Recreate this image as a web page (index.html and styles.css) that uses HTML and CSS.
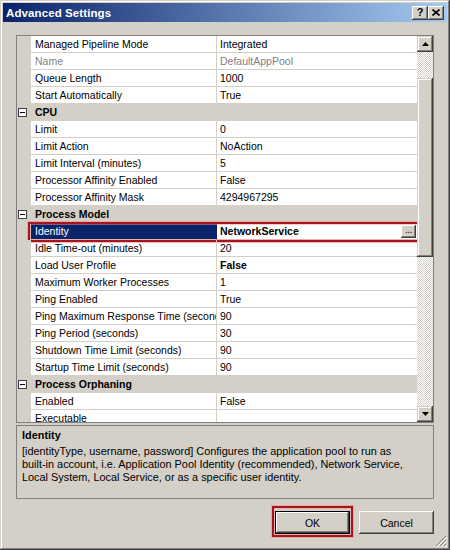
FILE: index.html
```html
<!DOCTYPE html>
<html>
<head>
<meta charset="utf-8">
<link rel="stylesheet" href="styles.css">
</head>
<body>
<div class="window">
  <div class="titlebar">
    <span class="title">Advanced Settings</span>
    <div class="tbtns">
      <span class="tbtn help">?</span>
      <span class="tbtn"><svg width="8" height="7" viewBox="0 0 8 7"><path d="M0.5 0.5 L7.5 6.5 M7.5 0.5 L0.5 6.5" stroke="#000" stroke-width="1.6"/></svg></span>
    </div>
  </div>
  <div class="content">
    <div class="grid">
      <div class="rows">
        <div class="row"><div class="gut"></div><div class="name">Managed Pipeline Mode</div><div class="val">Integrated</div></div>
        <div class="row ro"><div class="gut"></div><div class="name">Name</div><div class="val">DefaultAppPool</div></div>
        <div class="row"><div class="gut"></div><div class="name">Queue Length</div><div class="val">1000</div></div>
        <div class="row"><div class="gut"></div><div class="name">Start Automatically</div><div class="val">True</div></div>
        <div class="row cat"><div class="gut"><span class="minus"></span></div><div class="catname">CPU</div></div>
        <div class="row"><div class="gut"></div><div class="name">Limit</div><div class="val">0</div></div>
        <div class="row"><div class="gut"></div><div class="name">Limit Action</div><div class="val">NoAction</div></div>
        <div class="row"><div class="gut"></div><div class="name">Limit Interval (minutes)</div><div class="val">5</div></div>
        <div class="row"><div class="gut"></div><div class="name">Processor Affinity Enabled</div><div class="val">False</div></div>
        <div class="row"><div class="gut"></div><div class="name">Processor Affinity Mask</div><div class="val">4294967295</div></div>
        <div class="row cat"><div class="gut"><span class="minus"></span></div><div class="catname">Process Model</div></div>
        <div class="row sel"><div class="gut"></div><div class="name">Identity</div><div class="val bold"><span class="vtext">NetworkService</span><span class="dots">...</span></div></div>
        <div class="row"><div class="gut"></div><div class="name">Idle Time-out (minutes)</div><div class="val">20</div></div>
        <div class="row"><div class="gut"></div><div class="name">Load User Profile</div><div class="val bold">False</div></div>
        <div class="row"><div class="gut"></div><div class="name">Maximum Worker Processes</div><div class="val">1</div></div>
        <div class="row"><div class="gut"></div><div class="name">Ping Enabled</div><div class="val">True</div></div>
        <div class="row"><div class="gut"></div><div class="name">Ping Maximum Response Time (seconds)</div><div class="val">90</div></div>
        <div class="row"><div class="gut"></div><div class="name">Ping Period (seconds)</div><div class="val">30</div></div>
        <div class="row"><div class="gut"></div><div class="name">Shutdown Time Limit (seconds)</div><div class="val">90</div></div>
        <div class="row"><div class="gut"></div><div class="name">Startup Time Limit (seconds)</div><div class="val">90</div></div>
        <div class="row cat"><div class="gut"><span class="minus"></span></div><div class="catname">Process Orphaning</div></div>
        <div class="row"><div class="gut"></div><div class="name">Enabled</div><div class="val">False</div></div>
        <div class="row"><div class="gut"></div><div class="name">Executable</div><div class="val"></div></div>
      </div>
      <div class="scrollbar">
        <div class="sbtn"><svg width="7" height="4" viewBox="0 0 7 4"><path d="M3.5 0 L7 4 L0 4 Z" fill="#000"/></svg></div>
        <div class="track t1"></div>
        <div class="thumb"></div>
        <div class="track t2"></div>
        <div class="sbtn"><svg width="7" height="4" viewBox="0 0 7 4"><path d="M0 0 L7 0 L3.5 4 Z" fill="#000"/></svg></div>
      </div>
    </div>
    <div class="desc">
      <div class="desc-title">Identity</div>
      <div class="desc-text">[identityType, username, password] Configures the application pool to run as<br>built-in account, i.e. Application Pool Identity (recommended), Network Service,<br>Local System, Local Service, or as a specific user identity.</div>
    </div>
    <div class="buttons">
      <div class="btn default">OK</div>
      <div class="btn">Cancel</div>
    </div>
  </div>
  <svg class="grip" width="12" height="12" viewBox="0 0 12 12">
    <path d="M11 1 L1 11 M11 5 L5 11 M11 9 L9 11" stroke="#808080" stroke-width="1"/>
    <path d="M12 2 L2 12 M12 6 L6 12 M12 10 L10 12" stroke="#fff" stroke-width="1"/>
  </svg>
</div>
</body>
</html>
```

FILE: styles.css
```css
html, body {
  margin: 0;
  padding: 0;
  background: #d4d0c8;
}

.window {
  position: relative;
  width: 450px;
  height: 550px;
  box-sizing: border-box;
  padding: 3px;
  background: #d4d0c8;
  box-shadow: inset -1px -1px #404040, inset 1px 1px #d4d0c8, inset -2px -2px #808080, inset 2px 2px #fff;
  display: flex;
  flex-direction: column;
  font-family: "Liberation Sans", Arial, sans-serif;
  font-size: 10.5px;
  color: #000;
}

.titlebar {
  height: 19px;
  flex: none;
  display: flex;
  align-items: center;
  justify-content: space-between;
  padding: 0 3px 0 3px;
  background: linear-gradient(90deg, #0a246a 0%, #a6caf0 100%);
}

.title {
  color: #fff;
  font-weight: bold;
  font-size: 11.5px;
  letter-spacing: 0.1px;
}

.tbtns {
  display: flex;
}

.tbtn {
  width: 16px;
  height: 14px;
  box-sizing: border-box;
  background: #d4d0c8;
  box-shadow: inset -1px -1px #404040, inset 1px 1px #fff, inset -2px -2px #808080, inset 2px 2px #d4d0c8;
  display: flex;
  align-items: center;
  justify-content: center;
}

.tbtn.help {
  font-weight: bold;
  font-size: 11px;
  line-height: 14px;
  padding-bottom: 1px;
}

.content {
  flex: 1;
  display: flex;
  flex-direction: column;
  padding: 13px 13px 0 13px;
}

.grid {
  height: 388px;
  box-sizing: border-box;
  border: 1px solid #808080;
  display: flex;
  background: #fff;
}

.rows {
  width: 400px;
  height: 386px;
  overflow: hidden;
}

.row {
  position: relative;
  display: flex;
  height: 17px;
}

.gut {
  width: 14px;
  flex: none;
  background: #d4d0c8;
  display: flex;
  align-items: center;
  padding-left: 1px;
  box-sizing: border-box;
}

.name {
  width: 186px;
  flex: none;
  box-sizing: border-box;
  border-right: 1px solid #d4d0c8;
  border-bottom: 1px solid #d4d0c8;
  padding-left: 4px;
  line-height: 16px;
  white-space: nowrap;
  overflow: hidden;
}

.val {
  flex: 1;
  box-sizing: border-box;
  border-bottom: 1px solid #d4d0c8;
  padding-left: 3px;
  line-height: 16px;
  white-space: nowrap;
  overflow: hidden;
  display: flex;
}

.vtext {
  flex: 1;
}

.bold {
  font-weight: bold;
}

.ro .name,
.ro .val {
  color: #808080;
}

.cat .catname {
  flex: 1;
  background: #d4d0c8;
  font-weight: bold;
  padding-left: 4px;
  line-height: 17px;
}

.minus {
  position: relative;
  width: 9px;
  height: 9px;
  box-sizing: border-box;
  border: 1px solid #404040;
  background: #fff;
}

.minus::after {
  content: "";
  position: absolute;
  left: 1px;
  top: 3px;
  width: 5px;
  height: 1px;
  background: #000;
}

.sel .name {
  background: #0a246a;
  color: #fff;
  border-right-color: #0a246a;
}

.sel::after {
  content: "";
  position: absolute;
  left: 11px;
  right: -3px;
  top: -1px;
  bottom: -2px;
  border: 2px solid #a8141c;
  box-shadow: 0 0 0 1px rgba(240, 150, 150, 0.7), inset 0 0 0 1px rgba(240, 150, 150, 0.5);
  pointer-events: none;
}

.dots {
  width: 15px;
  height: 13px;
  margin-top: 2px;
  margin-right: 1px;
  box-sizing: border-box;
  background: #d4d0c8;
  box-shadow: inset -1px -1px #404040, inset 1px 1px #fff, inset -2px -2px #808080;
  font-weight: normal;
  font-size: 10px;
  line-height: 10px;
  text-align: center;
  letter-spacing: -0.5px;
}

.scrollbar {
  width: 16px;
  height: 386px;
  display: flex;
  flex-direction: column;
}

.sbtn,
.thumb {
  width: 16px;
  background: #d4d0c8;
  box-shadow: inset -1px -1px #404040, inset 1px 1px #d4d0c8, inset -2px -2px #808080, inset 2px 2px #fff;
}

.sbtn {
  height: 16px;
  flex: none;
  display: flex;
  align-items: center;
  justify-content: center;
}

.thumb {
  height: 179px;
  flex: none;
}

.track {
  background-color: #d4d0c8;
  background-image: conic-gradient(#fff 25%, #d4d0c8 0 50%, #fff 0 75%, #d4d0c8 0);
  background-size: 2px 2px;
}

.t1 {
  height: 26px;
  flex: none;
}

.t2 {
  flex: 1;
}

.desc {
  margin-top: 2px;
  height: 74px;
  box-sizing: border-box;
  border: 1px solid #808080;
  padding: 3px 5px;
}

.desc-title {
  font-weight: bold;
  font-size: 10.9px;
  line-height: 13px;
  margin-bottom: 3px;
}

.desc-text {
  font-size: 10.9px;
  line-height: 13px;
  white-space: nowrap;
}

.buttons {
  margin-top: 12px;
  display: flex;
  justify-content: flex-end;
  gap: 9px;
}

.btn {
  position: relative;
  width: 75px;
  height: 23px;
  box-sizing: border-box;
  background: #d4d0c8;
  box-shadow: inset -1px -1px #404040, inset 1px 1px #fff, inset -2px -2px #808080, inset 2px 2px #d4d0c8;
  display: flex;
  align-items: center;
  justify-content: center;
}

.btn.default {
  box-shadow: inset 0 0 0 1px #000, inset -2px -2px #404040, inset 2px 2px #fff, inset -3px -3px #808080;
}

.btn.default::after {
  content: "";
  position: absolute;
  left: -3px;
  right: -3px;
  top: -5px;
  bottom: -3px;
  border: 2px solid #a8141c;
  box-shadow: 0 0 0 1px rgba(240, 150, 150, 0.7), inset 0 0 0 1px rgba(240, 150, 150, 0.5);
}

.grip {
  position: absolute;
  right: 3px;
  bottom: 3px;
}
```
